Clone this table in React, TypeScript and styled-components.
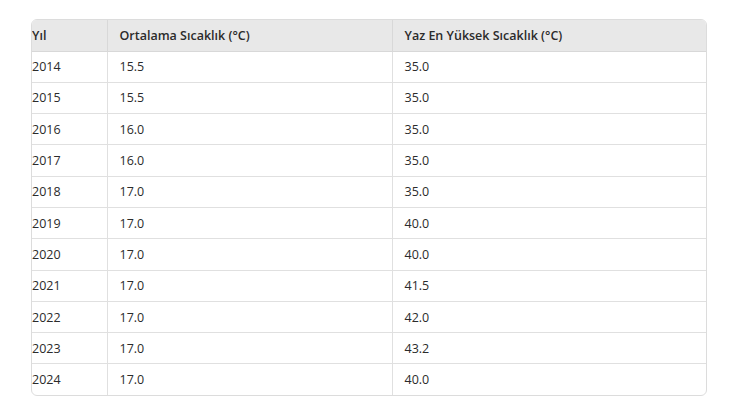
import React from 'react';
import styled, { createGlobalStyle } from 'styled-components';

const Global = createGlobalStyle`
  body {
    margin: 0;
    background: #fff;
    font-family: "Open Sans", "Noto Sans", sans-serif;
  }
`;

const Page = styled.div`
  padding: 19px 43px 0 31px;
`;

const Frame = styled.div`
  width: 676px;
  border: 1px solid #dcdcdc;
  border-radius: 6px;
  overflow: hidden;
  box-sizing: border-box;
`;

const Table = styled.table`
  width: 100%;
  border-collapse: collapse;
  table-layout: fixed;
  font-size: 12.5px;
  color: #2b2b2b;
`;

const Head = styled.th<{ $first?: boolean }>`
  height: 31px;
  background: #e8e8e8;
  font-weight: 600;
  text-align: left;
  padding: 0 0 0 ${(p) => (p.$first ? '0' : '12px')};
  border-left: ${(p) => (p.$first ? 'none' : '1px solid #d8d8d8')};
  border-bottom: 1px solid #d8d8d8;
  box-sizing: border-box;
`;

const Cell = styled.td<{ $first?: boolean }>`
  height: 31.3px;
  padding: 0 0 0 ${(p) => (p.$first ? '0' : '12px')};
  border-left: ${(p) => (p.$first ? 'none' : '1px solid #e0e0e0')};
  border-top: 1px solid #e0e0e0;
  box-sizing: border-box;
`;

const rows: [string, string, string][] = [
  ['2014', '15.5', '35.0'],
  ['2015', '15.5', '35.0'],
  ['2016', '16.0', '35.0'],
  ['2017', '16.0', '35.0'],
  ['2018', '17.0', '35.0'],
  ['2019', '17.0', '40.0'],
  ['2020', '17.0', '40.0'],
  ['2021', '17.0', '41.5'],
  ['2022', '17.0', '42.0'],
  ['2023', '17.0', '43.2'],
  ['2024', '17.0', '40.0'],
];

export default function App() {
  return (
    <>
      <Global />
      <Page>
        <Frame>
          <Table>
            <colgroup>
              <col style={{ width: 75 }} />
              <col style={{ width: 285 }} />
              <col />
            </colgroup>
            <thead>
              <tr>
                <Head $first>Yıl</Head>
                <Head>Ortalama Sıcaklık (°C)</Head>
                <Head>Yaz En Yüksek Sıcaklık (°C)</Head>
              </tr>
            </thead>
            <tbody>
              {rows.map(([y, avg, max]) => (
                <tr key={y}>
                  <Cell $first>{y}</Cell>
                  <Cell>{avg}</Cell>
                  <Cell>{max}</Cell>
                </tr>
              ))}
            </tbody>
          </Table>
        </Frame>
      </Page>
    </>
  );
}
